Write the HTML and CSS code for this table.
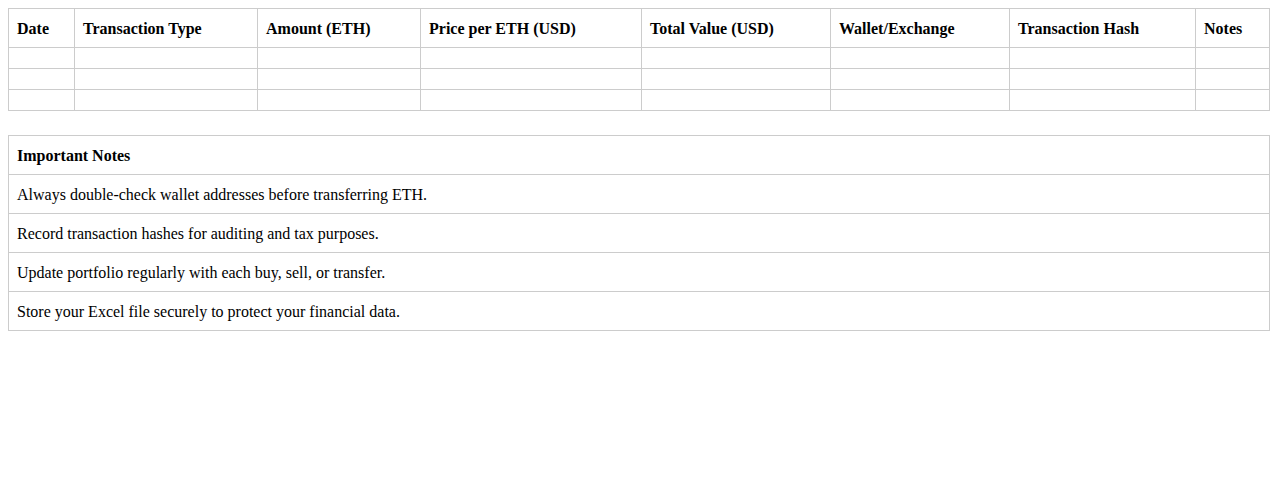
FILE: index.html
```html
<!DOCTYPE html>
<html>
<head>
<meta charset="utf-8">
<link rel="stylesheet" href="styles.css">
</head>
<body>
<table class="ledger">
  <colgroup>
    <col class="c1"><col class="c2"><col class="c3"><col class="c4"><col class="c5"><col class="c6"><col class="c7"><col class="c8">
  </colgroup>
  <thead>
    <tr>
      <th>Date</th>
      <th>Transaction Type</th>
      <th>Amount (ETH)</th>
      <th>Price per ETH (USD)</th>
      <th>Total Value (USD)</th>
      <th>Wallet/Exchange</th>
      <th>Transaction Hash</th>
      <th>Notes</th>
    </tr>
  </thead>
  <tbody>
    <tr><td></td><td></td><td></td><td></td><td></td><td></td><td></td><td></td></tr>
    <tr><td></td><td></td><td></td><td></td><td></td><td></td><td></td><td></td></tr>
    <tr><td></td><td></td><td></td><td></td><td></td><td></td><td></td><td></td></tr>
  </tbody>
</table>

<table class="notes">
  <thead>
    <tr><th>Important Notes</th></tr>
  </thead>
  <tbody>
    <tr><td>Always double-check wallet addresses before transferring ETH.</td></tr>
    <tr><td>Record transaction hashes for auditing and tax purposes.</td></tr>
    <tr><td>Update portfolio regularly with each buy, sell, or transfer.</td></tr>
    <tr><td>Store your Excel file securely to protect your financial data.</td></tr>
  </tbody>
</table>
</body>
</html>
```

FILE: styles.css
```css
body {
  margin: 8px;
  font-family: "Liberation Serif", "Times New Roman", serif;
  font-size: 16px;
  color: #000;
  background: #fff;
}

table {
  width: 100%;
  border-collapse: collapse;
}

th, td {
  border: 1px solid #ccc;
  padding: 11px 8px 9px;
  text-align: left;
  line-height: 18px;
}

th {
  font-weight: bold;
}

td {
  font-weight: normal;
}

.ledger {
  table-layout: fixed;
  margin-bottom: 24px;
}

.ledger td {
  height: 0;
}

.c1 { width: 66px; }
.c2 { width: 183px; }
.c3 { width: 163px; }
.c4 { width: 221px; }
.c5 { width: 189px; }
.c6 { width: 179px; }
.c7 { width: 186px; }
.c8 { width: 74px; }
```
